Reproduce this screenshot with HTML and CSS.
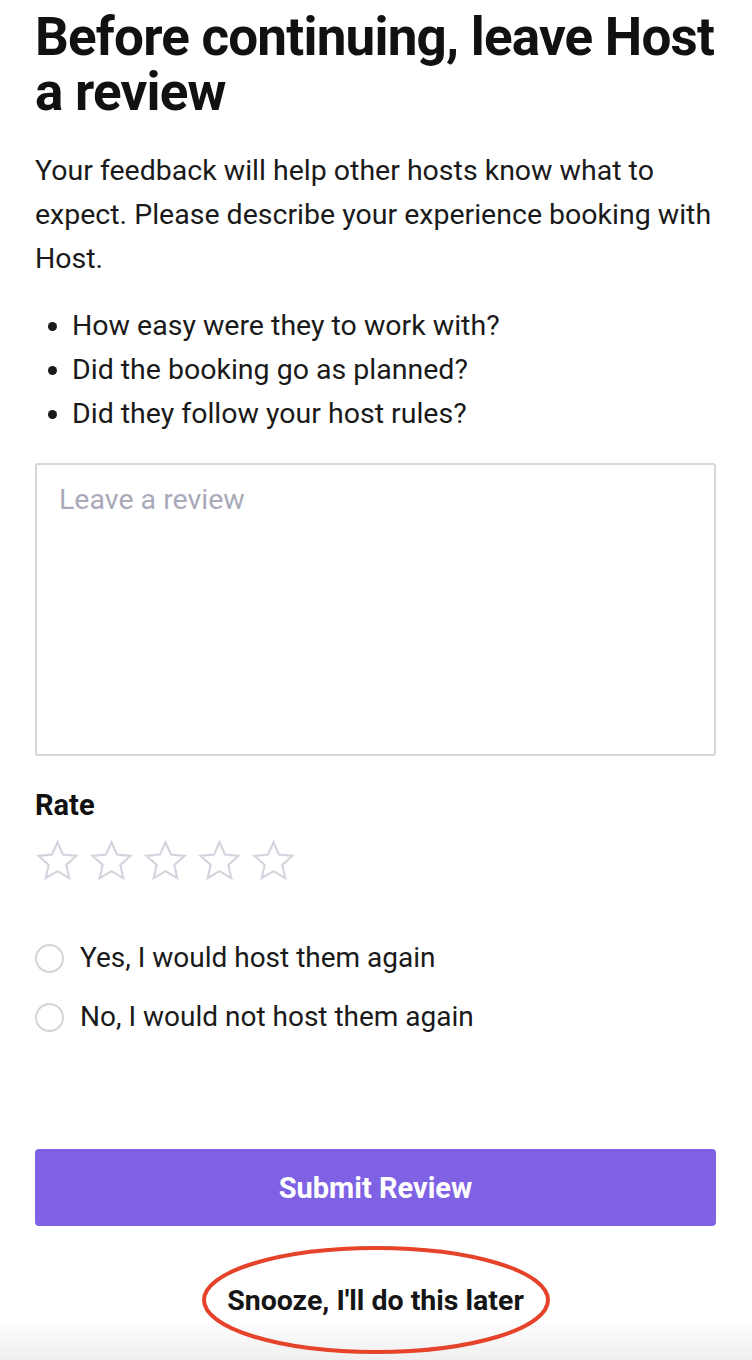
FILE: index.html
```html
<!DOCTYPE html>
<html>
<head>
<meta charset="utf-8">
<link rel="stylesheet" href="styles.css">
</head>
<body>
<main class="page">
  <h1 class="title">Before continuing, leave Host a review</h1>
  <p class="intro">Your feedback will help other hosts know what to expect. Please describe your experience booking with Host.</p>
  <ul class="questions">
    <li>How easy were they to work with?</li>
    <li>Did the booking go as planned?</li>
    <li>Did they follow your host rules?</li>
  </ul>
  <textarea class="review" placeholder="Leave a review"></textarea>
  <div class="rate-label">Rate</div>
  <div class="stars">
    <svg class="star" viewBox="0 0 48 48"><path d="M24 4.5l5.9 13.2 14.4 1.4-10.9 9.6 3.2 14.1L24 35.4l-12.6 7.4 3.2-14.1L3.7 19.1l14.4-1.4z"/></svg>
    <svg class="star" viewBox="0 0 48 48"><path d="M24 4.5l5.9 13.2 14.4 1.4-10.9 9.6 3.2 14.1L24 35.4l-12.6 7.4 3.2-14.1L3.7 19.1l14.4-1.4z"/></svg>
    <svg class="star" viewBox="0 0 48 48"><path d="M24 4.5l5.9 13.2 14.4 1.4-10.9 9.6 3.2 14.1L24 35.4l-12.6 7.4 3.2-14.1L3.7 19.1l14.4-1.4z"/></svg>
    <svg class="star" viewBox="0 0 48 48"><path d="M24 4.5l5.9 13.2 14.4 1.4-10.9 9.6 3.2 14.1L24 35.4l-12.6 7.4 3.2-14.1L3.7 19.1l14.4-1.4z"/></svg>
    <svg class="star" viewBox="0 0 48 48"><path d="M24 4.5l5.9 13.2 14.4 1.4-10.9 9.6 3.2 14.1L24 35.4l-12.6 7.4 3.2-14.1L3.7 19.1l14.4-1.4z"/></svg>
  </div>
  <div class="options">
    <label class="option"><span class="radio"></span><span>Yes, I would host them again</span></label>
    <label class="option"><span class="radio"></span><span>No, I would not host them again</span></label>
  </div>
  <button class="submit">Submit Review</button>
  <div class="snooze-wrap">
    <span class="snooze">Snooze, I'll do this later</span>
    <svg class="ring" viewBox="0 0 352 112"><ellipse cx="176" cy="56" rx="172" ry="52"/></svg>
  </div>
</main>
</body>
</html>
```

FILE: styles.css
```css
html, body {
  margin: 0;
  padding: 0;
}
body {
  background: linear-gradient(to bottom, #ffffff 0, #ffffff 1318px, #efefef 1360px);
  min-height: 1360px;
  font-family: Roboto, "Liberation Sans", sans-serif;
  color: #1a1a1a;
}
.page {
  padding: 0 36px 0 35px;
  display: flex;
  flex-direction: column;
}
.title {
  margin: 10px 0 0;
  font-size: 53px;
  line-height: 55px;
  font-weight: 700;
  letter-spacing: -0.8px;
  color: #111;
}
.intro {
  margin: 29px 0 0;
  font-size: 28.5px;
  line-height: 44px;
  color: #1a1a1a;
}
.questions {
  margin: 23px 0 0;
  padding: 0 0 0 37px;
  font-size: 28.5px;
  line-height: 44px;
}
.review {
  margin-top: 27px;
  height: 293px;
  box-sizing: border-box;
  border: 2px solid #d6d6dc;
  border-radius: 3px;
  padding: 18px 22px;
  font-family: Roboto, "Liberation Sans", sans-serif;
  font-size: 28.5px;
  resize: none;
  outline: none;
}
.review::placeholder {
  color: #a9a9b9;
}
.rate-label {
  margin-top: 32px;
  font-size: 29px;
  line-height: 34px;
  font-weight: 700;
  color: #111;
}
.stars {
  display: flex;
  gap: 9px;
  margin-top: 16px;
}
.star {
  width: 45px;
  height: 45px;
  fill: none;
  stroke: #d2d3dc;
  stroke-width: 2.2;
  stroke-linejoin: miter;
}
.options {
  margin-top: 57px;
  display: flex;
  flex-direction: column;
  gap: 23px;
}
.option {
  display: flex;
  align-items: center;
  gap: 16px;
  font-size: 28px;
  line-height: 36px;
  color: #1a1a1a;
}
.radio {
  width: 25px;
  height: 25px;
  border: 2px solid #d4d4dc;
  border-radius: 50%;
  flex: none;
}
.submit {
  margin-top: 114px;
  height: 77px;
  border: none;
  border-radius: 4px;
  background: #7f62e4;
  color: #fff;
  font-family: Roboto, "Liberation Sans", sans-serif;
  font-size: 29px;
  font-weight: 700;
}
.snooze-wrap {
  position: relative;
  align-self: center;
  margin-top: 18px;
  width: 352px;
  height: 112px;
  display: flex;
  align-items: center;
  justify-content: center;
}
.snooze {
  font-size: 28.5px;
  font-weight: 700;
  color: #151515;
}
.ring {
  position: absolute;
  inset: 0;
  width: 352px;
  height: 112px;
  fill: none;
  stroke: #e5432a;
  stroke-width: 4;
}
```
